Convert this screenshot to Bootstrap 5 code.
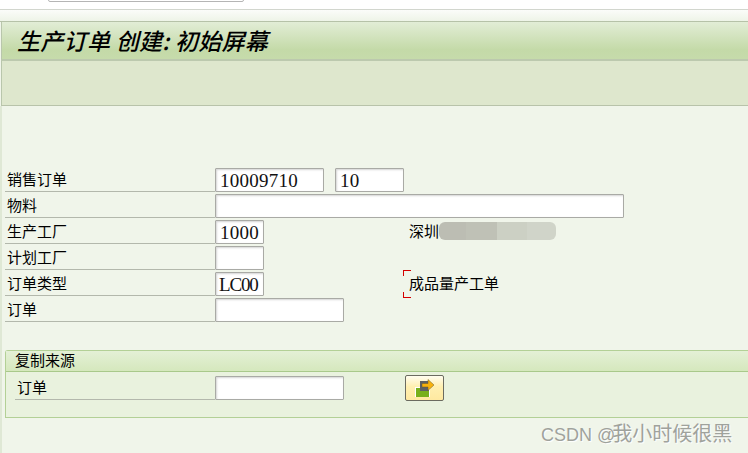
<!DOCTYPE html>
<html lang="zh">
<head>
    <meta charset="UTF-8">
    <meta name="viewport" content="width=device-width, initial-scale=1.0">
    <title>生产订单 创建: 初始屏幕</title>
    <link rel="stylesheet" href="https://cdn.jsdelivr.net/npm/bootstrap@5.3.0/dist/css/bootstrap.min.css">
    <style>
        html, body { height: 100%; }
        body { background: #f0f5ea; font-family: "Noto Sans CJK SC", sans-serif; font-size: 15px; color: #000; overflow: hidden; position: relative; }
        .top-white { height: 9px; background: #fff; position: relative; }
        .addr-edge { position: absolute; left: 48px; top: -6px; width: 196px; height: 8px; background: #fff; border: 1px solid #b5b5b5; border-radius: 2px; }
        .top-band { height: 13px; border-top: 1px solid #d2d6ce; border-bottom: 1px solid #b6c2a8; background: linear-gradient(#fbfcf9, #eef4e8); }
        .title-band { height: 39px; margin-left: 1px; padding-left: 15px; border-left: 1px solid #b9c6ac; border-bottom: 2px solid #bcc9ae; background: linear-gradient(#e2edd6, #c4daa8 75%, #c6dbab); font-size: 23px; font-weight: 500; font-style: italic; letter-spacing: .3px; line-height: 37px; white-space: nowrap; }
        .tool-band { height: 45px; margin-left: 1px; border-left: 1px solid #b9c6ac; border-bottom: 1px solid #b8c3aa; background: #dee7cd; }
        .page-body { border-left: 2px solid #dfe8d5; padding-left: 3px; height: 347px; }
        .form-area { padding-top: 62px; }
        .sap-row { height: 26px; }
        .sap-label { width: 210px; height: 24px; border-bottom: 1px solid #b3b8ac; padding-left: 2px; line-height: 21px; flex: none; }
        input.sap-field { height: 24px; padding: 1px 0 0 4px; border: 1px solid #a9aaa5; border-radius: 1px; box-shadow: inset 1px 1px 2px #d4d4d4; background: #fff; font-family: "Liberation Serif", serif; font-size: 19px; letter-spacing: .25px; line-height: 22px; color: #111; flex: none; }
        input.sap-tight { padding-left: 3px; letter-spacing: -1.2px; }
        .w-49 { width: 49px; }
        .w-69 { width: 69px; }
        .w-109 { width: 109px; }
        .w-129 { width: 129px; }
        .w-409 { width: 409px; }
        .gap-11 { margin-left: 11px; }
        .side-text { margin-left: 145px; line-height: 22px; position: relative; white-space: nowrap; }
        .blur-patch { display: inline-block; width: 117px; height: 18px; vertical-align: -3px; border-radius: 6px; background: linear-gradient(90deg, #bcbdb3 0 23%, #bfc1b6 23% 50%, #ccd0c4 50% 75%, #d0d4c9 75%); }
        .req-mark { position: absolute; left: -6px; top: -2px; width: 8px; height: 28px; border: solid #d40000; border-width: 1px 0; }
        .req-mark::before, .req-mark::after { content: ""; position: absolute; left: 0; width: 1px; height: 5px; background: #d40000; }
        .req-mark::before { top: 0; }
        .req-mark::after { bottom: 0; }
        .group-box { margin-top: 26px; height: 68px; border: solid #b3d096; border-width: 1px 0 1px 1px; border-top-left-radius: 3px; background: #e9f2de; }
        .group-head { height: 21px; border-bottom: 1px solid #a9c98b; background: linear-gradient(#e4f0d6, #d5e8bd); padding-left: 9px; line-height: 17px; }
        .group-row { padding: 4px 0 0 9px; }
        .group-row .sap-label { width: 200px; padding-left: 2px; }
        .copy-btn { width: 39px; height: 26px; margin: -1px 0 0 61px; padding: 0; border: 1px solid #6b6b60; border-radius: 2px; background: linear-gradient(#fffdf0, #ffefb0 45%, #ffe9a0); line-height: 0; }
        .csdn-mark { position: absolute; left: 541px; top: 421px; color: #9fa29c; font-size: 18px; line-height: 26px; white-space: nowrap; text-shadow: 1px 1px 1px #fff; font-family: "Liberation Sans", "Noto Sans CJK SC", sans-serif; }
        .csdn-name { font-size: 20px; margin-left: -3px; }
    </style>
</head>
<body>
    <div class="top-white"><div class="addr-edge"></div></div>
    <div class="top-band"></div>
    <div class="title-band">生产订单 创建: 初始屏幕</div>
    <div class="tool-band"></div>

    <div class="page-body">
        <div class="form-area">
            <div class="sap-row d-flex">
                <div class="sap-label">销售订单</div>
                <input class="sap-field w-109" value="10009710" readonly>
                <input class="sap-field w-69 gap-11" value="10" readonly>
            </div>
            <div class="sap-row d-flex">
                <div class="sap-label">物料</div>
                <input class="sap-field w-409" readonly>
            </div>
            <div class="sap-row d-flex">
                <div class="sap-label">生产工厂</div>
                <input class="sap-field w-49" value="1000" readonly>
                <div class="side-text">深圳<span class="blur-patch"></span></div>
            </div>
            <div class="sap-row d-flex">
                <div class="sap-label">计划工厂</div>
                <input class="sap-field w-49" readonly>
            </div>
            <div class="sap-row d-flex">
                <div class="sap-label">订单类型</div>
                <input class="sap-field sap-tight w-49" value="LC00" readonly>
                <div class="side-text"><span class="req-mark"></span>成品量产工单</div>
            </div>
            <div class="sap-row d-flex">
                <div class="sap-label">订单</div>
                <input class="sap-field w-129" readonly>
            </div>
        </div>

        <div class="group-box">
            <div class="group-head">复制来源</div>
            <div class="group-row d-flex">
                <div class="sap-label">订单</div>
                <input class="sap-field w-129" readonly>
                <button class="copy-btn btn" type="button">
                    <svg width="22" height="20" viewBox="0 0 22 20">
                        <rect x="1" y="9" width="15" height="10" fill="#fff"/>
                        <rect x="2" y="10" width="13" height="9" fill="#78b01c"/>
                        <rect x="6" y="3" width="9" height="10" fill="#5f6163"/>
                        <path d="M8 5.500h6V1.500l6 5.500-6 5.500V9H8z" fill="#f8b20e" stroke="#6b5a2a" stroke-width=".5"/>
                    </svg>
                </button>
            </div>
        </div>
    </div>

    <div class="csdn-mark">CSDN @<span class="csdn-name">我小时候很黑</span></div>

    <script src="https://cdn.jsdelivr.net/npm/bootstrap@5.3.0/dist/js/bootstrap.bundle.min.js"></script>
</body>
</html>
